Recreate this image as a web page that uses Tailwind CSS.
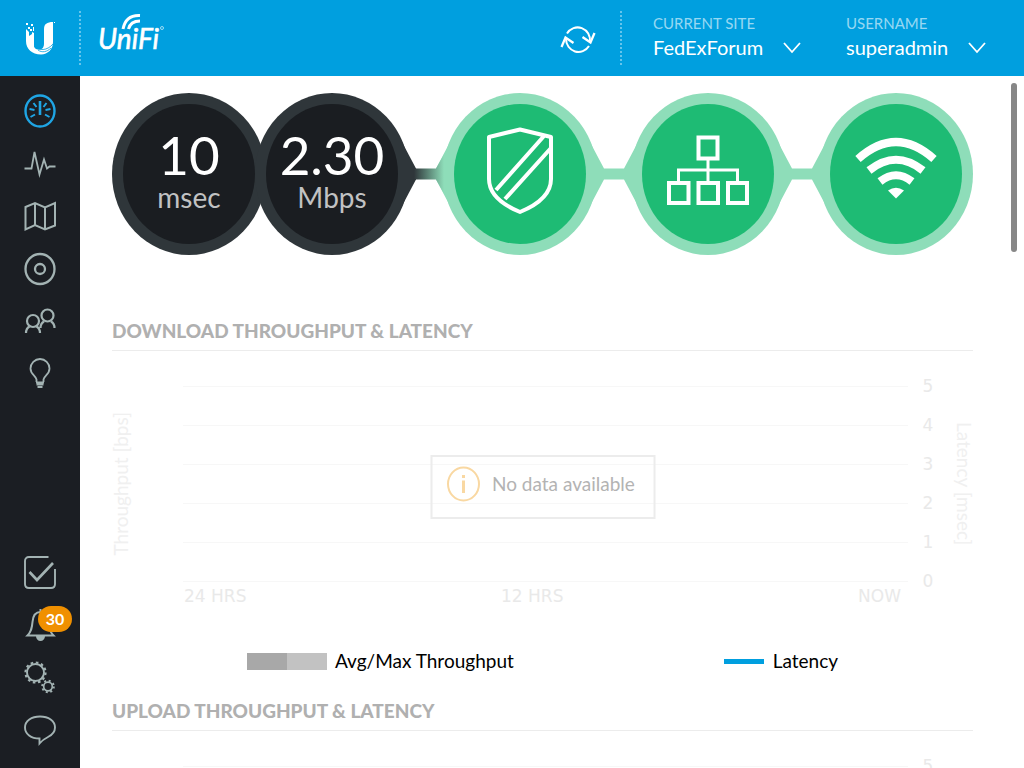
<!DOCTYPE html>
<html lang="en">
<head>
<meta charset="utf-8">
<meta name="viewport" content="width=device-width, initial-scale=1">
<title>UniFi Dashboard</title>
<script src="https://cdn.jsdelivr.net/npm/@tailwindcss/browser@4"></script>
</head>
<body class="flex h-screen flex-col overflow-hidden bg-white font-['Lato',sans-serif] text-black">
<header class="flex h-[76px] shrink-0 items-center bg-[#009fdf] text-white">
  <a href="#" aria-label="Ubiquiti" class="flex w-[79px] justify-center">
    <svg class="h-9 w-8" viewBox="0 0 32 36" fill="#fff">
      <path d="M29 2v20c0 7.500-5 12-12 12.500C8 34.500 2 29 2 21V9l3 3v4l3-2v-2l2 1v12c0 4 3 5 6 4.500 3-.5 4-3 4-6V9c0-5 3-7 9-7z"/>
      <path d="M10 26c5 5 13 5 19-2M14 30c4 3 9 2 13-2" fill="none" stroke="#009fdf" stroke-width="0.800"/>
      <path d="M2 3h2v2H2zM7 4h2v2H7zM4 7h2v2H4zM9 7h1v4H9zM6 9h2v2H6zM30 2h1v1h-1z"/>
    </svg>
  </a>
  <div class="h-[54px] border-l-2 border-dotted border-white/40"></div>
  <a href="#" aria-label="UniFi" class="ml-[17px]">
    <svg class="h-[50px] w-[68px]" viewBox="0 0 68 50">
      <text x="0" y="36" fill="#fff" stroke="#fff" stroke-width="0.600" font-family="Lato" font-style="italic" font-size="28">UniFi</text>
      <g fill="none" stroke="#fff" stroke-width="3"><path d="M25 16C27 6 33 2 42 2.500"/><path d="M30.500 16C32 10 36 8 42 8"/></g>
      <circle cx="64" cy="15" r="1.500" fill="none" stroke="#fff" stroke-opacity=".6"/>
    </svg>
  </a>
  <button aria-label="Refresh" class="ml-auto">
    <svg class="h-9 w-9" viewBox="0 0 36 36" fill="none" stroke="#fff" stroke-width="2">
      <path d="M7 13.500A12.500 13 0 0 1 30 22M29 26A12.500 13 0 0 1 6 19"/>
      <path d="M22.500 17l8 5.500 4-9.500M1.500 27l4-9.500 8 5.500" stroke-width="2.300"/>
    </svg>
  </button>
  <div class="ml-[24px] h-[54px] border-l-2 border-dotted border-white/40"></div>
  <div class="ml-[31px] mb-[2px] w-[149px]">
    <label for="site" class="block text-[15px] leading-5 text-white/60">CURRENT SITE</label>
    <div class="relative">
      <select id="site" class="w-full appearance-none bg-transparent text-xl leading-7 text-white"><option>FedExForum</option></select>
      <svg class="pointer-events-none absolute right-0 top-[9px] h-3 w-5" viewBox="0 0 20 12" fill="none" stroke="#fff" stroke-width="1.800"><path d="M2 1l8 9 8-9"/></svg>
    </div>
  </div>
  <div class="ml-[44px] mb-[2px] mr-[37px] w-[141px]">
    <label for="user" class="block text-[15px] leading-5 text-white/60">USERNAME</label>
    <div class="relative">
      <select id="user" class="w-full appearance-none bg-transparent text-xl leading-7 text-white"><option>superadmin</option></select>
      <svg class="pointer-events-none absolute right-0 top-[9px] h-3 w-5" viewBox="0 0 20 12" fill="none" stroke="#fff" stroke-width="1.800"><path d="M2 1l8 9 8-9"/></svg>
    </div>
  </div>
</header>

<div class="flex min-h-0 flex-1">
  <nav class="flex w-20 shrink-0 flex-col justify-between bg-[#1b1e23] pb-3 pt-[9px] text-[#a3b3b3]">
    <div class="grid h-[315px] grid-rows-6">
      <a href="#" aria-label="Dashboard" class="flex items-center justify-center text-[#1fa5e4]">
        <svg class="h-9 w-9" viewBox="0 0 36 36" fill="none" stroke="currentColor" stroke-width="2">
          <ellipse cx="18" cy="18" rx="14.500" ry="15.500" stroke-width="2.400"/>
          <path d="M18 8v14" stroke-width="2.600"/><path d="M11.500 10l3 4M24.500 10l-3 4M7.500 16l5 1M28.500 16l-5 1M8.500 24l4.500-2.500M27.500 24L23 21.500"/>
        </svg>
      </a>
      <a href="#" aria-label="Statistics" class="flex items-center justify-center">
        <svg class="h-9 w-9" viewBox="0 0 36 36" fill="none" stroke="currentColor" stroke-width="1.800"><path d="M2.500 22.500H9.500L12.500 6l5 22.500L22 13.500l3 9 2.500-2h6"/></svg>
      </a>
      <a href="#" aria-label="Map" class="flex items-center justify-center">
        <svg class="h-9 w-9" viewBox="0 0 36 36" fill="none" stroke="currentColor" stroke-width="2"><path d="M3.500 9L13 5l10 4.500L33 5v22.500L23 31.500 13 27 3.500 31.500zM13 5v22M23 9.500v22"/></svg>
      </a>
      <a href="#" aria-label="Devices" class="flex items-center justify-center">
        <svg class="h-9 w-9" viewBox="0 0 36 36" fill="none" stroke="currentColor" stroke-width="2.300"><ellipse cx="18" cy="18" rx="14.500" ry="15"/><circle cx="18" cy="18" r="5"/></svg>
      </a>
      <a href="#" aria-label="Clients" class="flex items-center justify-center">
        <svg class="h-9 w-9" viewBox="0 0 36 36" fill="none" stroke="currentColor" stroke-width="2.200"><circle cx="11" cy="18" r="6"/><circle cx="25.500" cy="12.500" r="6"/><path d="M4 30c0-3 1-5 3.500-6.500M18 30c0-3-1-5-3.500-6.500M32.500 25c0-3-1-5-3.500-6.500M18.500 25c0-3 1-5 3.500-6.500"/></svg>
      </a>
      <a href="#" aria-label="Insights" class="flex items-center justify-center">
        <svg class="h-9 w-9" viewBox="0 0 36 36" fill="none" stroke="currentColor" stroke-width="1.800"><path d="M14.500 26v-2.500C14 20 8.500 18.500 8.500 12.500a9.500 9.500 0 0 1 19 0c0 6-5.500 7.500-6 11V26M14 26.500h8M14.500 28.500h7M15.500 31h5"/></svg>
      </a>
    </div>
    <div class="grid h-[210px] grid-rows-4">
      <a href="#" aria-label="Tasks" class="flex items-center justify-center">
        <svg class="h-9 w-9" viewBox="0 0 36 36" fill="none" stroke="currentColor" stroke-width="1.900"><path d="M26.500 3H7C4.500 3 3 4.500 3 7v23c0 2.500 1.500 4 4 4h22c2.500 0 4-1.500 4-4V15"/><path d="M7.500 18l7.500 8L31 9" stroke-width="2.600"/></svg>
      </a>
      <a href="#" aria-label="Alerts, 30 new" class="relative flex items-center justify-center">
        <svg class="h-9 w-9" viewBox="0 0 36 36" fill="none" stroke="currentColor" stroke-width="2"><path d="M5.500 28.500h26c-4-4-4.500-8-5-13.500C26 8.500 23 5 18.500 5S11 8.500 10.500 15c-.5 5.500-1 9.500-5 13.500zM18.500 2v3"/><path d="M15 29a3.500 4 0 0 0 7 0z" fill="currentColor"/></svg>
        <span class="absolute left-[38px] top-[7px] flex h-[26px] w-[34px] items-center justify-center rounded-full bg-[#f09000] text-base font-bold text-white">30</span>
      </a>
      <a href="#" aria-label="Settings" class="flex items-center justify-center">
        <svg class="h-9 w-9" viewBox="0 0 36 36" fill="none" stroke="currentColor">
          <circle cx="13.500" cy="13.500" r="8.500" stroke-width="1.900"/><circle cx="13.500" cy="13.500" r="10" stroke-width="2.200" stroke-dasharray="2.600 2.636"/>
          <circle cx="26" cy="27.500" r="4.300" stroke-width="1.700"/><circle cx="26" cy="27.500" r="5.800" stroke-width="2" stroke-dasharray="2 2.555"/>
        </svg>
      </a>
      <a href="#" aria-label="Chat" class="flex items-center justify-center">
        <svg class="h-9 w-9" viewBox="0 0 36 36" fill="none" stroke="currentColor" stroke-width="1.900"><path d="M17.500 26.500C9 26.500 3 22 3 15.500S9.500 4.500 18 4.500s15 4.500 15 11c0 4.500-3 7.500-7 9.500-3 1.500-6 3.500-8.500 6.500z"/></svg>
      </a>
    </div>
  </nav>

  <main class="relative min-w-0 flex-1 overflow-hidden pl-8 pr-[51px] pt-[17px]">
    <div class="absolute right-[7px] top-[7px] h-[169px] w-[6px] rounded-full bg-[#878787]"></div>

    <svg class="w-full" viewBox="0 0 861 162" role="img" aria-label="Network health">
      <defs>
        <linearGradient id="link" gradientUnits="userSpaceOnUse" x1="302" y1="0" x2="332" y2="0"><stop offset="0" stop-color="#2f363a"/><stop offset="1" stop-color="#8eddb9"/></linearGradient>
      </defs>
      <g fill="#8eddb9">
        <ellipse cx="408" cy="81" rx="77" ry="81"/><ellipse cx="596" cy="81" rx="77" ry="81"/><ellipse cx="784" cy="81" rx="77" ry="81"/>
        <path d="M324 75.500L346 34h124l22 41.500h20L534 34h124l22 41.500h20L722 34v94L700 86.500h-20L658 128H534L512 86.500h-20L470 128H346L324 86.500z"/>
      </g>
      <g fill="#2f363a">
        <ellipse cx="77" cy="81" rx="77" ry="81"/><ellipse cx="220" cy="81" rx="77" ry="81"/>
        <path d="M220 34h62l22 41.500v11L282 128h-62z"/>
      </g>
      <path d="M302 75.500h22l8-14v39l-8-14h-22z" fill="url(#link)"/>
      <g fill="#1a1d21"><ellipse cx="77" cy="81" rx="66" ry="70"/><ellipse cx="220" cy="81" rx="66" ry="70"/></g>
      <g fill="#1ebb74"><ellipse cx="408" cy="81" rx="66" ry="70"/><ellipse cx="596" cy="81" rx="66" ry="70"/><ellipse cx="784" cy="81" rx="66" ry="70"/></g>
      <g text-anchor="middle" font-family="Lato">
        <g fill="#fff" font-size="53"><text x="77" y="82">10</text><text x="220" y="82">2.30</text></g>
        <g fill="#c1c2c3" font-size="28"><text x="77" y="115">msec</text><text x="220" y="115">Mbps</text></g>
      </g>
      <g fill="none" stroke="#fff" stroke-width="4" stroke-linejoin="round">
        <path d="M408 36.500l31 7.500v42c0 16-14 26-31 33-17-7-31-17-31-33V44zM432 43L384 97M439 55L393 106"/>
        <path d="M586.500 44.500h19v21h-19zM557 90h19.500v20H557zM586.500 90h19.500v20h-19.500zM616 90h19v20h-19z" stroke-linejoin="miter"/>
        <path d="M596 66v24M566.500 90V77h59v13" stroke-width="3" stroke-linejoin="miter"/>
      </g>
      <g fill="none" stroke="#fff" stroke-width="8">
        <path d="M746 66Q784 32 822 66"/>
        <path d="M757 77.500Q784 56 811 77.500"/>
        <path d="M768 88.500Q784 76 800 88.500"/>
      </g>
      <path d="M776 97.500Q784 92 792 97.500L784 105.500z" fill="#fff"/>
    </svg>

    <section class="mt-[64px]">
      <h2 class="border-b border-[#ececec] pb-[7px] text-[19px] font-black leading-6 text-[#b0b0b0]">DOWNLOAD THROUGHPUT &amp; LATENCY</h2>
      <div class="relative flex justify-between pt-[25px] font-['DejaVu_Sans'] text-[17px] leading-5 text-[#e9e9e9]">
        <div class="flex w-[71px] items-start pt-[36px]"><span class="rotate-180 whitespace-nowrap font-['Lato'] text-[19px] leading-[18px] text-[#f0f0f0] [writing-mode:vertical-rl]">Throughput [bps]</span></div>
        <div class="flex-1">
          <div class="grid gap-[19px]">
            <div class="flex items-center gap-3"><span class="h-px flex-1 bg-[#f7f7f7]"></span><span class="w-4 text-center">5</span></div>
            <div class="flex items-center gap-3"><span class="h-px flex-1 bg-[#f7f7f7]"></span><span class="w-4 text-center">4</span></div>
            <div class="flex items-center gap-3"><span class="h-px flex-1 bg-[#f7f7f7]"></span><span class="w-4 text-center">3</span></div>
            <div class="flex items-center gap-3"><span class="h-px flex-1 bg-[#f7f7f7]"></span><span class="w-4 text-center">2</span></div>
            <div class="flex items-center gap-3"><span class="h-px flex-1 bg-[#f7f7f7]"></span><span class="w-4 text-center">1</span></div>
            <div class="flex items-center gap-3"><span class="h-px flex-1 bg-[#f7f7f7]"></span><span class="w-4 text-center">0</span></div>
          </div>
          <div class="-mt-[5px] flex justify-between pl-px pr-[35px]"><span>24 HRS</span><span class="mr-10">12 HRS</span><span>NOW</span></div>
        </div>
        <div class="flex w-[37px] items-start justify-end pt-[46px]"><span class="whitespace-nowrap font-['Lato'] text-[19px] leading-[18px] text-[#f0f0f0] [writing-mode:vertical-rl]">Latency [msec]</span></div>
        <div class="absolute left-1/2 top-[104px] flex h-16 w-[225px] -translate-x-1/2 items-start gap-3 border-2 border-[#ececec] pl-[14px] pt-[9px] font-['Lato'] text-[19px] leading-9 text-[#b3b3b3]">
          <svg class="h-9 w-[34px] shrink-0" viewBox="0 0 34 36" fill="none" stroke="#f9d8a2" stroke-width="2"><ellipse cx="17" cy="18" rx="15.500" ry="16.500"/><path d="M17 14.500v12.500M17 9v3" stroke-width="3"/></svg>
          <span class="whitespace-nowrap">No data available</span>
        </div>
      </div>
      <div class="flex justify-between px-[135px] pt-[43px] text-[19px] leading-6">
        <div class="flex items-center gap-2"><span class="flex"><i class="h-[17px] w-10 bg-[#a8a8a8]"></i><i class="h-[17px] w-10 bg-[#c2c2c2]"></i></span>Avg/Max Throughput</div>
        <div class="flex items-center gap-[9px]"><i class="h-[5px] w-10 bg-[#009fdf]"></i>Latency</div>
      </div>
    </section>

    <section class="mt-[26px]">
      <h2 class="border-b border-[#ececec] pb-[7px] text-[19px] font-black leading-6 text-[#b0b0b0]">UPLOAD THROUGHPUT &amp; LATENCY</h2>
      <div class="flex pl-[71px] pr-[37px] pt-[25px] font-['DejaVu_Sans'] text-[17px] leading-5 text-[#e9e9e9]">
        <div class="flex flex-1 items-center gap-3"><span class="h-px flex-1 bg-[#f7f7f7]"></span><span class="w-4 text-center">5</span></div>
      </div>
    </section>
  </main>
</div>
</body>
</html>
